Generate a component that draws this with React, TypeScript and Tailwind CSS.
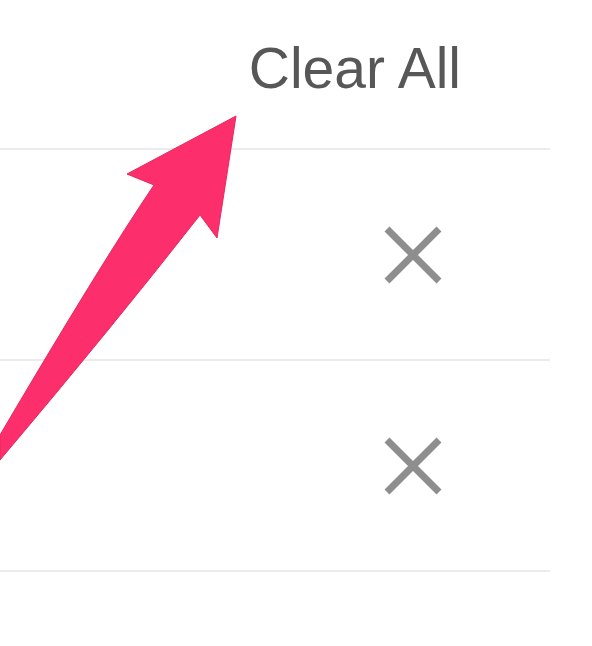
import React from "react";

function CloseIcon() {
  return (
    <svg width="60" height="60" viewBox="0 0 60 60" aria-hidden="true">
      <path d="M4 4 L56 56 M56 4 L4 56" stroke="#8e8e8e" strokeWidth="7" fill="none" />
    </svg>
  );
}

function Arrow() {
  return (
    <svg
      className="pointer-events-none absolute left-0 top-0"
      width="592"
      height="646"
      viewBox="0 0 592 646"
      aria-hidden="true"
    >
      <path
        d="M236 116 L127 174 L154 185 Q100 265 0 435 L0 460 Q110 330 200 215 L217 238 Z"
        fill="#fc2e6c"
        stroke="#e8275f"
        strokeWidth="1"
        strokeLinejoin="round"
      />
    </svg>
  );
}

const items = [1, 2];

export default function App() {
  return (
    <div className="relative h-[646px] w-[592px] overflow-hidden bg-white font-['Liberation_Sans',Arial,sans-serif]">
      <div className="w-[550px]">
        <div className="flex h-[150px] justify-end border-b-2 border-[#ebebeb] pr-[89px] pt-[40px]">
          <button className="h-fit text-[57px] leading-none text-[#575757]">Clear All</button>
        </div>
        {items.map((id) => (
          <div
            key={id}
            className="flex h-[211px] items-center justify-end border-b-2 border-[#ebebeb] pr-[107px]"
          >
            <button className="flex" aria-label="Remove">
              <CloseIcon />
            </button>
          </div>
        ))}
      </div>
      <Arrow />
    </div>
  );
}
